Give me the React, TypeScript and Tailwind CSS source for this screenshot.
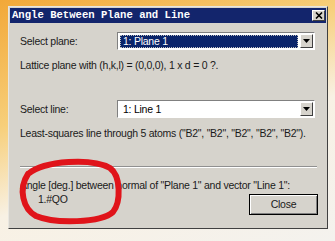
import React from "react";

const sunken =
  "border border-t-[#808080] border-l-[#808080] border-b-white border-r-white";

function DropArrow() {
  return (
    <div className="w-[13px] h-[14px] bg-[#d6d3cc] border border-t-white border-l-white border-b-[#404040] border-r-[#404040] flex items-center justify-center">
      <svg width="7" height="4" viewBox="0 0 7 4">
        <path d="M0 0h7L3.5 4z" fill="#000" />
      </svg>
    </div>
  );
}

function Combo({ value, selected }: { value: string; selected?: boolean }) {
  return (
    <div className={`w-[198px] h-[18px] bg-white flex items-center p-[1px] ${sunken}`}>
      <div className="flex-1 h-full flex items-center pr-[2px]">
        <div
          className={
            selected
              ? "flex-1 h-[13px] ml-[1px] bg-[#0a246a] text-white border border-dotted border-[#c0c0c0] flex items-center pl-[2px]"
              : "flex-1 h-[13px] ml-[1px] text-black flex items-center pl-[3px]"
          }
        >
          {value}
        </div>
      </div>
      <DropArrow />
    </div>
  );
}

export default function App() {
  return (
    <div
      className="relative w-[335px] h-[241px] overflow-hidden pt-[6px] pl-[8px] bg-[linear-gradient(160deg,#f2a838_0%,#f7cf7a_35%,#f8f1e4_60%,#f4f2ee_100%)]"
      style={{ fontFamily: '"Liberation Sans", Arial, sans-serif' }}
    >
      <div className="w-[320px] h-[223px] bg-[#d6d3cc] border border-t-[#e8e6e0] border-l-[#e8e6e0] border-b-[#404040] border-r-[#404040] flex flex-col">
        <div className="mx-[1px] mt-[1px] h-[15px] bg-[#13256c] flex items-center justify-between pl-[2px] pr-[1px]">
          <span
            className="text-white font-bold text-[10.6px] leading-none"
            style={{ fontFamily: '"Liberation Mono", "Courier New", monospace' }}
          >
            Angle Between Plane and Line
          </span>
          <div className="w-[13px] h-[11px] bg-[#d6d3cc] border border-t-white border-l-white border-b-[#404040] border-r-[#404040] flex items-center justify-center">
            <svg width="8" height="7" viewBox="0 0 8 7">
              <path d="M1 0.5l6 6M7 0.5l-6 6" stroke="#000" strokeWidth="1.6" />
            </svg>
          </div>
        </div>

        <div className="flex-1 flex flex-col px-[11px] text-[10.5px] leading-[13px] text-[#1a1a1a] tracking-[-0.25px]">
          <div className="mt-[9px] flex items-center">
            <span className="w-[97px]">Select plane:</span>
            <Combo value="1: Plane 1" selected />
          </div>
          <div className="mt-[9px]">Lattice plane with (h,k,l) = (0,0,0), 1 x d = 0 ?.</div>

          <div className="mt-[28px] flex items-center">
            <span className="w-[97px]">Select line:</span>
            <Combo value="1: Line 1" />
          </div>
          <div className="mt-[9px]">
            Least-squares line through 5 atoms ("B2", "B2", "B2", "B2", "B2").
          </div>

          <div className="mt-[26px] h-[2px] w-[297px] border-t border-t-[#909090] border-b border-b-white" />

          <div className="mt-[11px]">
            Angle [deg.] between normal of "Plane 1" and vector "Line 1":
          </div>
          <div className="flex items-start justify-between">
            <span className="ml-[18px] mt-[1px]">1.#QO</span>
            <button className="mt-[2px] mr-[-2px] w-[69px] h-[21px] bg-[#d6d3cc] border border-black shadow-[inset_1px_1px_0_#fff,inset_-1px_-1px_0_#808080] text-[10.5px]">
              Close
            </button>
          </div>
        </div>
      </div>

      <svg
        className="absolute left-0 top-0 pointer-events-none"
        width="335"
        height="241"
        viewBox="0 0 335 241"
      >
        <path
          d="M28 174 C45 160 92 158 110 168 C121 176 121 202 113 212 C101 223 55 224 36 216 C23 209 18 189 28 174"
          fill="none"
          stroke="#e0141a"
          strokeWidth="6"
          strokeLinecap="round"
        />
      </svg>
    </div>
  );
}
